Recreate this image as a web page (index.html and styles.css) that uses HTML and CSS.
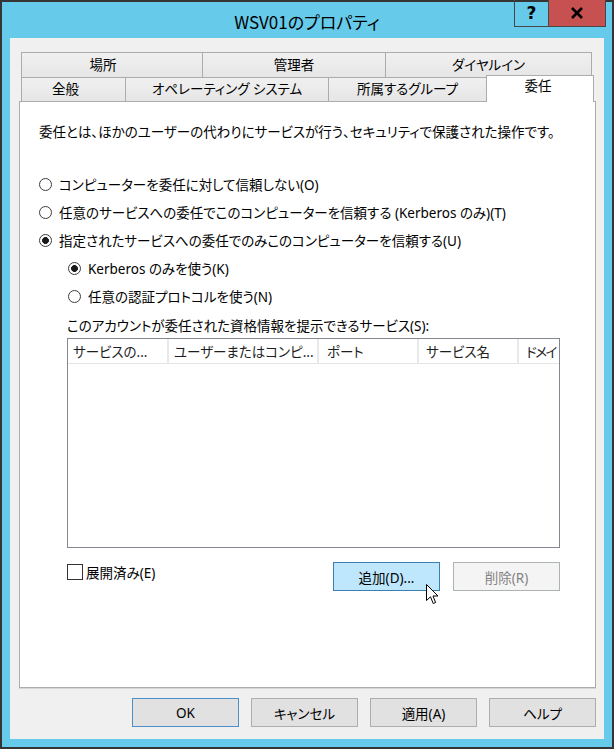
FILE: index.html
```html
<!DOCTYPE html>
<html lang="ja">
  <head>
    <meta charset="UTF-8" />
    <title>WSV01のプロパティ</title>
    <link rel="stylesheet" href="styles.css">
  </head>
  <body>
    <div class="window">
      <div class="titlebar">
        <span class="title">WSV01のプロパティ</span>
        <div class="caption-buttons">
          <span class="cap help">?</span>
          <span class="cap close">
            <svg width="14" height="12" viewBox="0 0 14 12">
              <path d="M2 1 L12 11 M12 1 L2 11" stroke="#000" stroke-width="2.6" />
            </svg>
          </span>
        </div>
      </div>
      <div class="client">
        <div class="tabs">
          <div class="tab-row row-back">
            <div class="tab">場所</div>
            <div class="tab">管理者</div>
            <div class="tab">ダイヤルイン</div>
          </div>
          <div class="tab-row row-front">
            <div class="tab">全般</div>
            <div class="tab">オペレーティング システム</div>
            <div class="tab">所属するグループ</div>
            <div class="tab selected">委任</div>
          </div>
        </div>
        <div class="panel">
          <p class="desc">委任とは、ほかのユーザーの代わりにサービスが行う、セキュリティで保護された操作です。</p>
          <div class="options">
            <label class="radio"><span class="circle"></span>コンピューターを委任に対して信頼しない(O)</label>
            <label class="radio"><span class="circle"></span>任意のサービスへの委任でこのコンピューターを信頼する (Kerberos のみ)(T)</label>
            <label class="radio"><span class="circle checked"></span>指定されたサービスへの委任でのみこのコンピューターを信頼する(U)</label>
            <label class="radio sub"><span class="circle checked"></span>Kerberos のみを使う(K)</label>
            <label class="radio sub"><span class="circle"></span>任意の認証プロトコルを使う(N)</label>
          </div>
          <div class="services">
            <div class="services-label">このアカウントが委任された資格情報を提示できるサービス(S):</div>
            <div class="listview">
              <div class="list-header">
                <span class="col col-type">サービスの...</span>
                <span class="col col-user">ユーザーまたはコンピ...</span>
                <span class="col col-port">ポート</span>
                <span class="col col-name">サービス名</span>
                <span class="col col-domain">ドメイ</span>
              </div>
            </div>
            <div class="services-footer">
              <label class="check"><span class="box"></span>展開済み(E)</label>
              <div class="list-buttons">
                <button class="btn hot">追加(D)...</button>
                <button class="btn" disabled>削除(R)</button>
                <svg class="cursor" width="13" height="21" viewBox="0 0 13 21">
                  <path d="M0.5 0.5 L0.5 16.5 L4.5 12.8 L7.2 19.5 L9.6 18.5 L7 12 L12 12 Z" fill="#fff" stroke="#000" stroke-width="1" />
                </svg>
              </div>
            </div>
          </div>
        </div>
        <div class="dialog-buttons">
          <button class="btn default">OK</button>
          <button class="btn">キャンセル</button>
          <button class="btn">適用(A)</button>
          <button class="btn">ヘルプ</button>
        </div>
      </div>
    </div>
  </body>
</html>
```

FILE: styles.css
```css
* {
  margin: 0;
  padding: 0;
  box-sizing: border-box;
}
body {
  background: #fff;
  font-family: "Noto Sans", "Noto Sans CJK JP", sans-serif;
  font-feature-settings: "palt";
  font-size: 13.5px;
  color: #000;
}
.window {
  position: relative;
  width: 614px;
  height: 749px;
  background: #66cbea;
  border: 2px solid #353535;
}
.titlebar {
  height: 36px;
  display: flex;
  align-items: center;
  justify-content: center;
  padding-top: 3px;
}
.title {
  font-family: "Noto Sans CJK JP", sans-serif;
  font-size: 17px;
  color: #000;
}
.caption-buttons {
  position: absolute;
  top: -2px;
  right: 6px;
  display: flex;
  border: 1px solid #474747;
  border-top: none;
}
.cap {
  height: 26px;
  display: flex;
  align-items: center;
  justify-content: center;
}
.cap.help {
  width: 34px;
  border-right: 1px solid #474747;
  font-family: "DejaVu Sans", sans-serif;
  font-weight: bold;
  font-size: 17px;
}
.cap.close {
  width: 56px;
  background: #c75050;
}
.client {
  height: 701px;
  margin: 0 8px;
  background: #f0f0f0;
  padding: 14px 8px 0 9px;
}
.tabs {
  padding: 0 2px;
}
.tab-row {
  display: grid;
}
.row-back {
  grid-template-columns: 182px 183px 206px;
  height: 26px;
}
.row-front {
  grid-template-columns: 105px 203px 158px 107px;
  height: 23px;
}
.tab {
  display: flex;
  align-items: center;
  justify-content: center;
  background: linear-gradient(#f0f0f0, #e6e6e6);
  border: 1px solid #acacac;
  border-left: none;
  white-space: nowrap;
  line-height: 1;
}
.tab:first-child {
  border-left: 1px solid #acacac;
}
.row-back .tab {
  padding-top: 1px;
}
.row-back .tab:first-child {
  padding-right: 18px;
}
.row-front .tab {
  border-top: none;
  border-bottom: none;
  padding-top: 1px;
}
.row-front .tab:first-child {
  padding-right: 16px;
}
.row-front .tab.selected {
  position: relative;
  z-index: 1;
  background: #fff;
  border: 1px solid #acacac;
  border-bottom: none;
  margin: -3px 0 -1px -1px;
  align-items: flex-start;
  padding-top: 4px;
  padding-right: 4px;
}
.panel {
  height: 587px;
  background: #fff;
  border: 1px solid #acacac;
  box-shadow: 0 1px 0 #d6d6d6;
  padding: 20px 0 0 19px;
}
.desc {
  line-height: 20px;
  white-space: nowrap;
}
.options {
  margin-top: 32px;
  display: flex;
  flex-direction: column;
  gap: 8px;
}
.radio {
  display: flex;
  align-items: center;
  height: 20px;
  gap: 7px;
  white-space: nowrap;
}
.radio.sub {
  margin-left: 29px;
}
.circle {
  width: 13px;
  height: 13px;
  border-radius: 50%;
  border: 1px solid #3c3c3c;
  background: #fff;
  flex: none;
}
.circle.checked {
  background: radial-gradient(circle, #1a1a1a 0 3.1px, #fff 3.7px);
}
.services {
  margin-left: 28px;
  width: 493px;
}
.services-label {
  margin-top: 10px;
  line-height: 20px;
  white-space: nowrap;
}
.listview {
  margin-top: 2px;
  height: 210px;
  border: 1px solid #828790;
  background: #fff;
  overflow: hidden;
}
.list-header {
  display: flex;
  height: 25px;
  border-bottom: 1px solid #e5e5e5;
}
.col {
  flex: none;
  display: flex;
  align-items: center;
  padding-left: 5px;
  border-right: 2px solid #e9e9e9;
  white-space: nowrap;
  overflow: hidden;
  color: #1e1e1e;
}
.col-type { width: 101px; }
.col-user { width: 150px; }
.col-port { width: 100px; padding-left: 8px; }
.col-name { width: 100px; padding-left: 7px; }
.col-domain {
  flex: 1;
  min-width: 0;
  padding-left: 7px;
  border-right: none;
  letter-spacing: -1.5px;
}
.services-footer {
  margin-top: 14px;
  display: flex;
  justify-content: space-between;
  align-items: flex-start;
}
.check {
  display: flex;
  align-items: center;
  gap: 3px;
  height: 20px;
}
.box {
  width: 16px;
  height: 16px;
  border: 1px solid #333;
  background: #fff;
}
.list-buttons {
  position: relative;
  display: flex;
  gap: 13px;
}
.btn {
  width: 107px;
  height: 29px;
  font-family: inherit;
  font-feature-settings: "palt";
  font-size: 13.5px;
  color: #000;
  background: #e1e1e1;
  border: 1px solid #adadad;
}
.btn.hot {
  background: #bee6fd;
  border-color: #3c7fb1;
}
.btn:disabled {
  background: #f4f4f4;
  border-color: #adb2b5;
  color: #838383;
}
.btn.default {
  border-color: #4c8fc8;
}
.cursor {
  position: absolute;
  left: 93px;
  top: 22px;
}
.dialog-buttons {
  margin-top: 10px;
  display: flex;
  justify-content: flex-end;
  gap: 12px;
}
```
